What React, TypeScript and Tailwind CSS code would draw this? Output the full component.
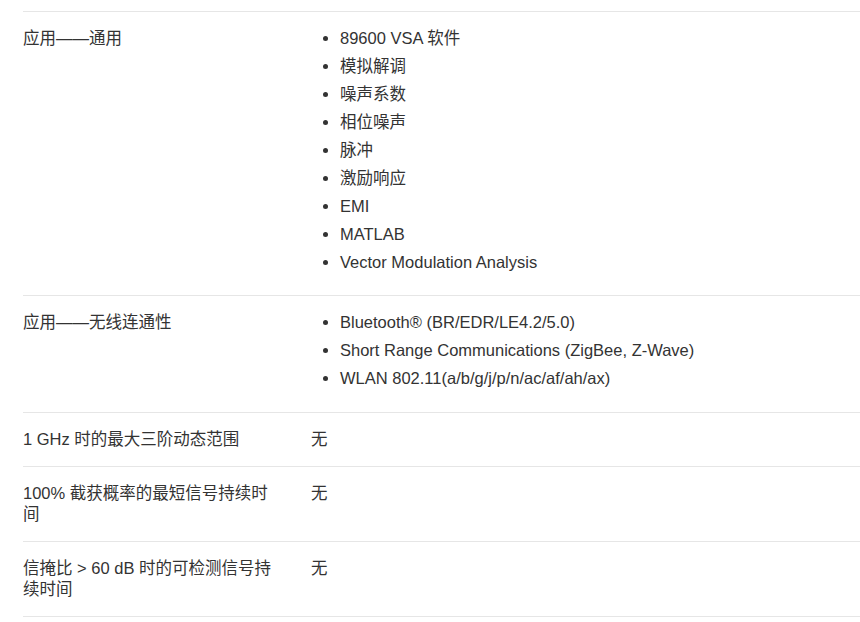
const rows: { label: string; items?: string[]; value?: string }[] = [
  {
    label: '应用——通用',
    items: [
      '89600 VSA 软件',
      '模拟解调',
      '噪声系数',
      '相位噪声',
      '脉冲',
      '激励响应',
      'EMI',
      'MATLAB',
      'Vector Modulation Analysis',
    ],
  },
  {
    label: '应用——无线连通性',
    items: [
      'Bluetooth® (BR/EDR/LE4.2/5.0)',
      'Short Range Communications (ZigBee, Z-Wave)',
      'WLAN 802.11(a/b/g/j/p/n/ac/af/ah/ax)',
    ],
  },
  { label: '1 GHz 时的最大三阶动态范围', value: '无' },
  { label: '100% 截获概率的最短信号持续时间', value: '无' },
  { label: '信掩比 > 60 dB 时的可检测信号持续时间', value: '无' },
];

export default function App() {
  return (
    <div
      className="min-h-[622px] bg-white pl-[23px] pt-[11px] text-[16.5px] leading-[21px] text-[#333]"
      style={{ fontFamily: '"Liberation Sans", Arial, "Noto Sans CJK SC", sans-serif' }}
    >
      <div className="border-b border-[#e6e6e6]">
        {rows.map((row) => (
          <div key={row.label} className="flex border-t border-[#e6e6e6] py-4">
            <div className="w-[288px] shrink-0 pr-[33px]">{row.label}</div>
            <div className="flex-1">
              {row.items ? (
                <ul className="list-disc pl-[29px]">
                  {row.items.map((item) => (
                    <li key={item} className="mb-[6.95px]">
                      {item}
                    </li>
                  ))}
                </ul>
              ) : (
                <span>{row.value}</span>
              )}
            </div>
          </div>
        ))}
      </div>
    </div>
  );
}
